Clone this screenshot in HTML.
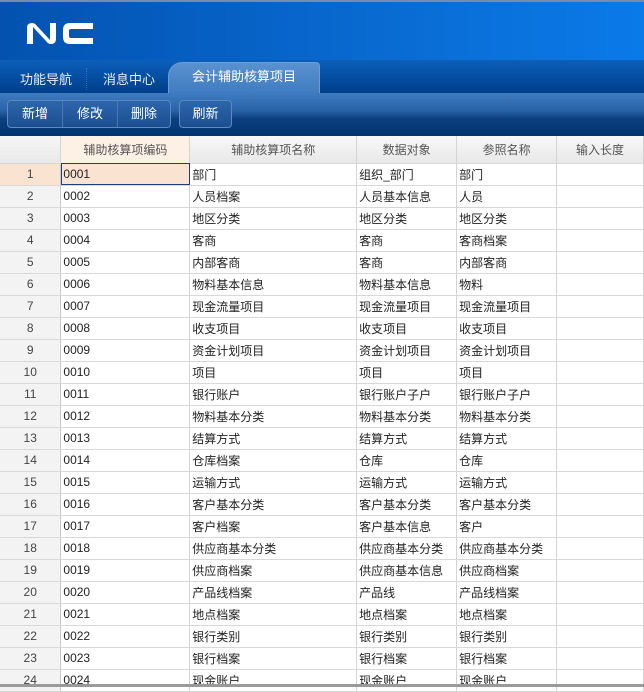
<!DOCTYPE html>
<html><head><meta charset="utf-8"><style>
*{margin:0;padding:0;box-sizing:border-box}
body{width:644px;height:687px;overflow:hidden;background:#fff;font-family:"Liberation Sans","Noto Sans CJK SC",sans-serif;font-size:12px;position:relative}
#top{position:absolute;left:0;top:0;width:644px;height:62px;background:linear-gradient(90deg,#0352b0 0%,#0a6fd8 70%,#0a7ae8 100%);border-top:2px solid #7a8aa8}
#tabs{position:absolute;left:0;top:60px;width:644px;height:33px;background:linear-gradient(#0c5fba,#003f8a)}
.tab{position:absolute;top:9px;color:#e8eef8;font-size:13px}
#act{position:absolute;left:168px;top:2px;width:152px;height:32px;background:linear-gradient(#5a92d0,#3f7bc0);border-radius:14px 4px 0 0;color:#fff;text-align:center;line-height:28px;font-size:13px;border:1px solid #6a9ed6;border-bottom:none}
#tb{position:absolute;left:0;top:93px;width:644px;height:43px;background:linear-gradient(#3f7bc0 0%,#2a64a8 40%,#0c3f80 60%,#003670 100%)}
.bg{position:absolute;top:7px;height:28px;border:1px solid #5b8ac4;border-radius:4px;background:linear-gradient(#2c66ab,#1c4f90);display:flex}
.bg span{color:#fff;font-size:13px;line-height:26px;text-align:center;border-left:1px solid #4a78b0}
.bg span:first-child{border-left:none}
table{position:absolute;left:0;top:136px;border-collapse:collapse;table-layout:fixed}
td,th{height:22px;border-right:1px solid #d4d4d4;border-bottom:1px solid #d8d8d8;font-weight:normal;font-size:12px;color:#222;white-space:nowrap;overflow:hidden;padding-left:2px;text-align:left}
th{height:27px;background:linear-gradient(#f8f8f8,#e8e8e8);color:#555;text-align:center;padding:0}
th.sel{background:#fdf0e4}
td.n{background:#f3f3f3;color:#444;text-align:center;padding:0;border-right:1px solid #c8c8c8}
tr.s td{background:#fbe3d2}
tr.s td.c{outline:1px solid #1e3f7a;outline-offset:-1px}
#bot{position:absolute;left:0;top:684px;width:644px;height:3px;background:#9a9a9a}
</style></head><body>
<div id="top"><svg width="80" height="30" style="position:absolute;left:24px;top:18px" viewBox="0 0 80 30"><path d="M3 24V8q0-5 5-5q3 0 5 3l13 14V3h6v16q0 5-5 5q-3 0-5-3L9 7v17z" fill="#fff"/><path d="M69 3H46q-7 0-7 7v7q0 7 7 7h23v-6H47q-2 0-2-2v-5q0-2 2-2h22z" fill="#fff"/></svg></div>
<div id="tabs">
<div class="tab" style="left:20px">功能导航</div>
<div style="position:absolute;left:86px;top:8px;height:22px;border-left:1px dotted #3b6fae"></div>
<div class="tab" style="left:103px">消息中心</div>
<div id="act">会计辅助核算项目</div>
</div>
<div id="tb">
<div class="bg" style="left:7px;width:164px"><span style="width:54px">新增</span><span style="width:55px">修改</span><span style="width:53px">删除</span></div>
<div class="bg" style="left:179px;width:53px"><span style="width:51px">刷新</span></div>
</div>
<table>
<colgroup><col style="width:61px"><col style="width:129px"><col style="width:167px"><col style="width:100px"><col style="width:100px"><col style="width:87px"></colgroup>
<tr><th style="background:linear-gradient(#f6f6f6,#e9e9e9)"></th><th class="sel">辅助核算项编码</th><th>辅助核算项名称</th><th>数据对象</th><th>参照名称</th><th>输入长度</th></tr>
<tr class="s"><td class="n">1</td><td class="c">0001</td><td style="background:#fff">部门</td><td style="background:#fff">组织_部门</td><td style="background:#fff">部门</td><td style="background:#fff"></td></tr>
<tr><td class="n">2</td><td>0002</td><td>人员档案</td><td>人员基本信息</td><td>人员</td><td></td></tr>
<tr><td class="n">3</td><td>0003</td><td>地区分类</td><td>地区分类</td><td>地区分类</td><td></td></tr>
<tr><td class="n">4</td><td>0004</td><td>客商</td><td>客商</td><td>客商档案</td><td></td></tr>
<tr><td class="n">5</td><td>0005</td><td>内部客商</td><td>客商</td><td>内部客商</td><td></td></tr>
<tr><td class="n">6</td><td>0006</td><td>物料基本信息</td><td>物料基本信息</td><td>物料</td><td></td></tr>
<tr><td class="n">7</td><td>0007</td><td>现金流量项目</td><td>现金流量项目</td><td>现金流量项目</td><td></td></tr>
<tr><td class="n">8</td><td>0008</td><td>收支项目</td><td>收支项目</td><td>收支项目</td><td></td></tr>
<tr><td class="n">9</td><td>0009</td><td>资金计划项目</td><td>资金计划项目</td><td>资金计划项目</td><td></td></tr>
<tr><td class="n">10</td><td>0010</td><td>项目</td><td>项目</td><td>项目</td><td></td></tr>
<tr><td class="n">11</td><td>0011</td><td>银行账户</td><td>银行账户子户</td><td>银行账户子户</td><td></td></tr>
<tr><td class="n">12</td><td>0012</td><td>物料基本分类</td><td>物料基本分类</td><td>物料基本分类</td><td></td></tr>
<tr><td class="n">13</td><td>0013</td><td>结算方式</td><td>结算方式</td><td>结算方式</td><td></td></tr>
<tr><td class="n">14</td><td>0014</td><td>仓库档案</td><td>仓库</td><td>仓库</td><td></td></tr>
<tr><td class="n">15</td><td>0015</td><td>运输方式</td><td>运输方式</td><td>运输方式</td><td></td></tr>
<tr><td class="n">16</td><td>0016</td><td>客户基本分类</td><td>客户基本分类</td><td>客户基本分类</td><td></td></tr>
<tr><td class="n">17</td><td>0017</td><td>客户档案</td><td>客户基本信息</td><td>客户</td><td></td></tr>
<tr><td class="n">18</td><td>0018</td><td>供应商基本分类</td><td>供应商基本分类</td><td>供应商基本分类</td><td></td></tr>
<tr><td class="n">19</td><td>0019</td><td>供应商档案</td><td>供应商基本信息</td><td>供应商档案</td><td></td></tr>
<tr><td class="n">20</td><td>0020</td><td>产品线档案</td><td>产品线</td><td>产品线档案</td><td></td></tr>
<tr><td class="n">21</td><td>0021</td><td>地点档案</td><td>地点档案</td><td>地点档案</td><td></td></tr>
<tr><td class="n">22</td><td>0022</td><td>银行类别</td><td>银行类别</td><td>银行类别</td><td></td></tr>
<tr><td class="n">23</td><td>0023</td><td>银行档案</td><td>银行档案</td><td>银行档案</td><td></td></tr>
<tr><td class="n">24</td><td>0024</td><td>现金账户</td><td>现金账户</td><td>现金账户</td><td></td></tr>
</table>
<div id="bot"></div>
</body></html>
